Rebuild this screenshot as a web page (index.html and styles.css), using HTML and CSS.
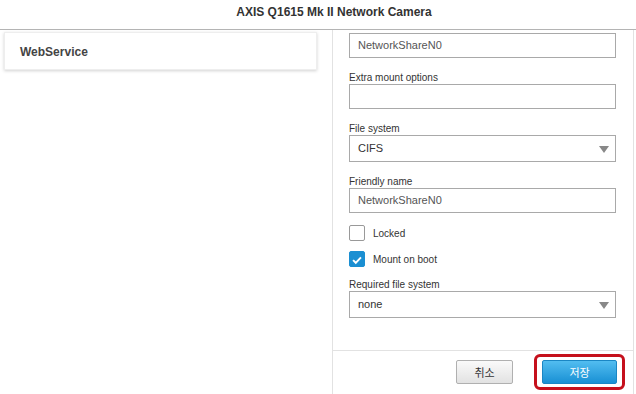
FILE: index.html
```html
<!DOCTYPE html>
<html>
<head>
	<meta charset="utf-8">
	<link rel="stylesheet" href="styles.css">
	<title>AXIS Q1615 Mk II Network Camera</title>
</head>
<body>
	<div class="title">AXIS Q1615 Mk II Network Camera</div>
	<div class="main">
		<div class="side">
			<div class="card">WebService</div>
		</div>
		<div class="panel">
			<div class="form">
				<div class="field first">
					<div class="input">NetworkShareN0</div>
				</div>
				<div class="field">
					<div class="label">Extra mount options</div>
					<div class="input"></div>
				</div>
				<div class="field">
					<div class="label">File system</div>
					<div class="select">CIFS<span class="arrow"></span></div>
				</div>
				<div class="field">
					<div class="label">Friendly name</div>
					<div class="input">NetworkShareN0</div>
				</div>
				<div class="check first-check"><span class="box"></span>Locked</div>
				<div class="check"><span class="box on"><svg width="16" height="16" viewBox="0 0 16 16"><path d="M3.5 8.2 L6.6 11.2 L12.5 5" fill="none" stroke="#fff" stroke-width="2.2"/></svg></span>Mount on boot</div>
				<div class="field after-check">
					<div class="label">Required file system</div>
					<div class="select">none<span class="arrow"></span></div>
				</div>
			</div>
			<div class="actions">
				<button class="btn cancel">취소</button>
				<div class="mark"><button class="btn save">저장</button></div>
			</div>
		</div>
	</div>
</body>
</html>
```

FILE: styles.css
```css
html, body {
	margin: 0;
	height: 100%;
	overflow: hidden;
}

body {
	font-family: "Liberation Sans", Arial, "Noto Sans CJK KR", sans-serif;
	background-color: #fff;
	color: #333;
	display: flex;
	flex-direction: column;
}

.title {
	height: 29px;
	line-height: 25px;
	text-align: center;
	font-size: 12px;
	font-weight: bold;
	color: #333;
	border-bottom: 1px solid #b4b4b4;
	padding-left: 32px;
}

.main {
	flex: 1;
	display: flex;
}

.side {
	width: 332px;
	padding: 2px 0 0 4px;
	box-sizing: border-box;
}

.card {
	width: 313px;
	height: 38px;
	line-height: 38px;
	padding-left: 15px;
	box-sizing: border-box;
	background-color: #fff;
	border: 1px solid #eee;
	box-shadow: 0 1px 3px rgba(0, 0, 0, 0.18);
	font-size: 12px;
	font-weight: bold;
	color: #444;
}

.panel {
	width: 300px;
	border-left: 1px solid #e2e2e2;
	border-right: 1px solid #e2e2e2;
	display: flex;
	flex-direction: column;
}

.form {
	padding: 3px 0 0 16px;
	height: 321px;
	box-sizing: border-box;
	border-bottom: 1px solid #e2e2e2;
}

.field {
	margin-top: 14px;
}

.field.first {
	margin-top: 0;
}

.field.after-check {
	margin-top: 12px;
}

.label {
	font-size: 10px;
	line-height: 12px;
	color: #333;
}

.input, .select {
	width: 267px;
	height: 25px;
	box-sizing: border-box;
	border: 1px solid #a9a9a9;
	padding-left: 8px;
	line-height: 23px;
	font-size: 11px;
	color: #555;
	background-color: #fff;
}

.select {
	height: 27px;
	line-height: 25px;
	color: #333;
	position: relative;
}

.arrow {
	position: absolute;
	right: 6px;
	top: 10px;
	border-left: 5px solid transparent;
	border-right: 5px solid transparent;
	border-top: 7px solid #888;
}

.check {
	display: flex;
	align-items: center;
	font-size: 10px;
	color: #333;
	margin-top: 10px;
	height: 16px;
}

.check.first-check {
	margin-top: 12px;
}

.box {
	width: 16px;
	height: 16px;
	box-sizing: border-box;
	border: 1px solid #999;
	border-radius: 2px;
	margin-right: 8px;
	display: flex;
}

.box.on {
	background-color: #1b8fd2;
	border-color: #1b8fd2;
}

.actions {
	display: flex;
	justify-content: flex-end;
	align-items: center;
	padding: 3px 8px 0 0;
}

.btn {
	height: 24px;
	font-family: "Liberation Sans", Arial, "Noto Sans CJK KR", sans-serif;
	font-size: 11px;
	border-radius: 2px;
	cursor: pointer;
}

.cancel {
	width: 57px;
	margin-right: 21px;
	border: 1px solid #b0b0b0;
	background: linear-gradient(#fafafa, #e2e2e2);
	color: #333;
}

.mark {
	border: 3px solid #c5101c;
	border-radius: 6px;
	padding: 3px 5px;
}

.save {
	width: 75px;
	display: block;
	border: 1px solid #1a86c4;
	background: linear-gradient(#52bdf0, #1990d4);
	color: #fff;
}
```
